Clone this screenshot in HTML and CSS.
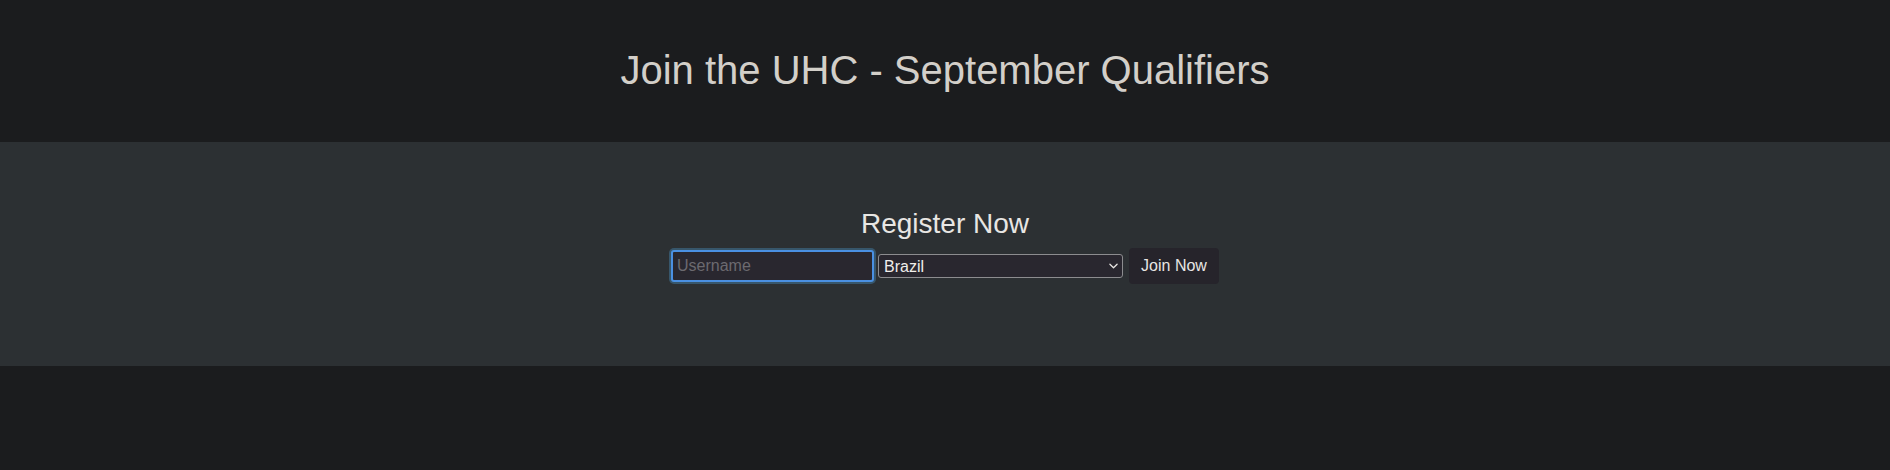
FILE: index.html
```html
<!DOCTYPE html>
<html lang="en">
<head>
<meta charset="utf-8">
<title>Join the UHC - September Qualifiers</title>
<link rel="stylesheet" href="styles.css">
</head>
<body>
  <header class="hero">
    <h1 class="hero-title">Join the UHC - September Qualifiers</h1>
  </header>
  <section class="register">
    <h3 class="register-title">Register Now</h3>
    <form class="register-form">
      <input class="field-input" type="text" placeholder="Username">
      <div class="select-wrap">
        <select class="field-select">
          <option>Brazil</option>
        </select>
        <svg class="select-chevron" viewBox="0 0 10 6" width="9" height="6" aria-hidden="true">
          <path d="M1 1 L5 5 L9 1" fill="none" stroke="#e8e6e3" stroke-width="1.4" stroke-linecap="round" stroke-linejoin="round"/>
        </svg>
      </div>
      <button class="btn-join" type="button">Join Now</button>
    </form>
  </section>
</body>
</html>
```

FILE: styles.css
```css
* { box-sizing: border-box; }

html, body {
  margin: 0;
  padding: 0;
  background: #1b1c1e;
  font-family: "Liberation Sans", Arial, sans-serif;
  color: #e8e6e3;
}

.hero {
  padding: 46px 0 48px;
  text-align: center;
}

.hero-title {
  margin: 0;
  font-size: 40px;
  line-height: 48px;
  font-weight: 400;
  color: #d3cfc9;
}

.register {
  background: #2c3033;
  padding: 65px 0 82px;
  display: flex;
  flex-direction: column;
  align-items: center;
}

.register-title {
  margin: 0 0 7px;
  font-size: 28px;
  line-height: 34px;
  font-weight: 400;
  color: #e8e6e3;
}

.register-form {
  display: flex;
  align-items: center;
  gap: 4px;
  height: 36px;
}

.field-input {
  width: 203px;
  height: 32px;
  padding: 0 4px;
  margin-top: -1px;
  background: #29272f;
  border: 2px solid #4a90e2;
  border-radius: 3px;
  box-shadow: 0 0 0 2px #37566b;
  outline: none;
  font-family: "Liberation Sans", Arial, sans-serif;
  font-size: 16px;
  color: #e8e6e3;
}

.field-input::placeholder {
  color: #6c6a70;
}

.select-wrap {
  position: relative;
  width: 245px;
  height: 24px;
}

.field-select {
  appearance: none;
  -webkit-appearance: none;
  width: 100%;
  height: 100%;
  padding: 0 20px 0 5px;
  background: #29272f;
  border: 1px solid #8c8c8f;
  border-radius: 3px;
  font-family: "Liberation Sans", Arial, sans-serif;
  font-size: 16px;
  color: #f0eeeb;
}

.select-chevron {
  position: absolute;
  right: 5px;
  top: 9px;
  pointer-events: none;
}

.btn-join {
  margin-left: 2px;
  width: 90px;
  height: 36px;
  padding: 0 12px;
  background: #26242b;
  border: 0;
  border-radius: 4px;
  font-family: "Liberation Sans", Arial, sans-serif;
  font-size: 16px;
  color: #e8e6e3;
}
```
